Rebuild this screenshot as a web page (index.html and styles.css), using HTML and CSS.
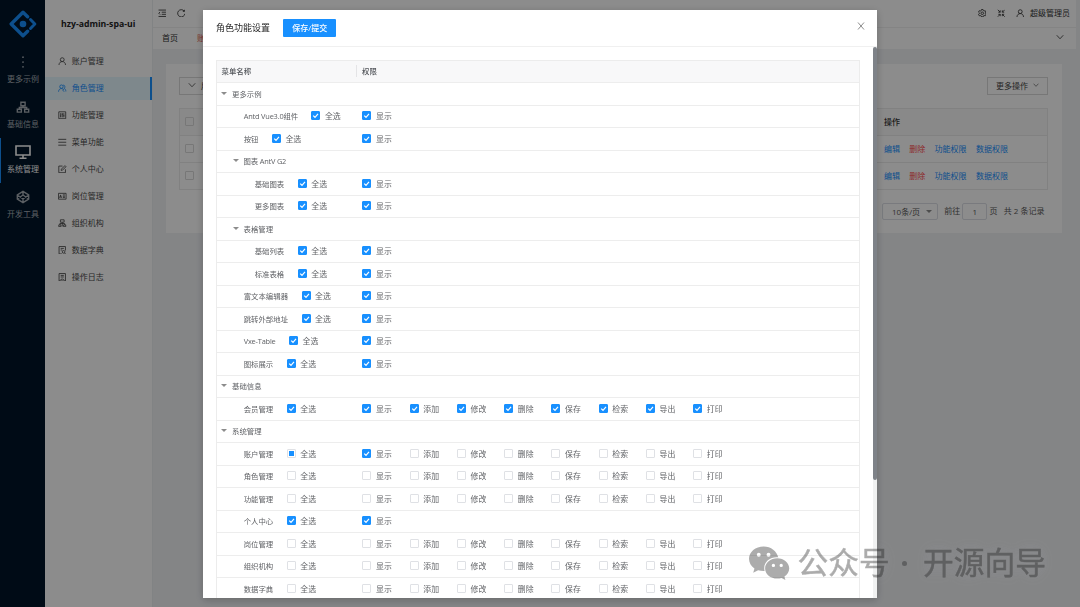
FILE: index.html
```html
<!DOCTYPE html>
<html>
<head>
<meta charset="utf-8">
<title>hzy-admin-spa-ui</title>
<link rel="stylesheet" href="styles.css">
</head>
<body>
<div class="app">
  <nav class="rail">
    <div class="logo"><svg viewBox="0 0 28 28"><g fill="none" stroke="#1890ff" stroke-width="3.4" stroke-linejoin="round" stroke-linecap="round"><path d="M18.600 6.700 14 2.200 2.200 14 14 25.800l4.600-4.500"/><path d="m21.500 9.500 4.400 4.500-4.400 4.500" stroke-width="2.900"/></g><circle cx="14" cy="14" r="3.300" fill="#1890ff"/></svg></div>
    <a class="rail-item"><svg viewBox="0 0 16 16" fill="currentColor"><circle cx="8" cy="2.500" r="1"/><circle cx="8" cy="8" r="1"/><circle cx="8" cy="13.500" r="1"/></svg><span>更多示例</span></a>
    <a class="rail-item"><svg viewBox="0 0 16 16" class="line"><path d="M5.600 2.500h4.800v4H5.600zM1.500 10.500h4.600v3.400H1.500zM9.900 10.500h4.600v3.400H9.900zM8 6.500v2M3.800 10.500v-2h8.400v2"/></svg><span>基础信息</span></a>
    <a class="rail-item active"><svg viewBox="0 0 16 16" class="line"><path d="M1 2h14v9H1zM8 11v3M4.500 14.200h7"/></svg><span>系统管理</span></a>
    <a class="rail-item"><svg viewBox="0 0 16 16" class="line"><path d="m8 1.500 6.500 4.200v4.600L8 14.500l-6.500-4.200V5.700zM8 1.500v4.200M8 10.300v4.200M1.500 5.700 8 10.300l6.500-4.600M1.500 10.300 8 5.700l6.500 4.600"/></svg><span>开发工具</span></a>
  </nav>
  <aside class="side">
    <h1>hzy-admin-spa-ui</h1>
    <a class="side-item"><svg viewBox="0 0 16 16" class="line"><circle cx="8" cy="5" r="3.600"/><path d="M1.800 15c.3-4 2.600-6.400 6.200-6.400s5.900 2.400 6.200 6.400"/></svg>账户管理</a>
    <a class="side-item active"><svg viewBox="0 0 16 16" class="line"><circle cx="6.500" cy="5" r="3.200"/><path d="M1 14.500c.3-3.500 2.200-6 5.500-6 2 0 3.500 1 4.500 2.700M9.800 2a3.200 3.200 0 0 1 1.500 6c2.200 1 3.300 3 3.500 6M8.500 11l3 3.500"/></svg>角色管理</a>
    <a class="side-item"><svg viewBox="0 0 16 16" class="line"><path d="M1.500 1.500h13v13h-13zM5 4v8M8 4v8M11 4v8M4 9.500h2M7 6h2M10 9h2"/></svg>功能管理</a>
    <a class="side-item"><svg viewBox="0 0 16 16" class="line"><path d="M.5 2.500h15M.5 8h15M.5 13.500h15"/></svg>菜单功能</a>
    <a class="side-item"><svg viewBox="0 0 16 16" class="line"><path d="M8.500 2H1.500v12.500H14V8M6 10.200l.4-2.400L13 1.200l2 2-6.600 6.600z"/></svg>个人中心</a>
    <a class="side-item"><svg viewBox="0 0 16 16" class="line"><path d="M.8 2.500h14.400v11H.8zM3 11l1.800-5.500L6.600 11M3.600 9.300H6M9 5.500h4M9 8h4M9 10.500h4"/></svg>岗位管理</a>
    <a class="side-item"><svg viewBox="0 0 16 16" class="line"><path d="M4.500 1.500h7v4.500h-7zM1.500 11h4v3.500h-4zM10.500 11h4v3.500h-4zM8 6v8M3.500 11V8.500h9V11"/></svg>组织机构</a>
    <a class="side-item"><svg viewBox="0 0 16 16" class="line"><path d="M7.500 15H2V1h12v7.500M5 4.500h6M5 7.500h3"/><circle cx="10.500" cy="11" r="2.500"/><path d="m12.300 13 2 2"/></svg>数据字典</a>
    <a class="side-item"><svg viewBox="0 0 16 16" class="line"><path d="M2 1h12v14H2zM5 4.500h6M5 7.500h6M4 14c1-3.500 7-3.500 8 0"/></svg>操作日志</a>
  </aside>
  <main class="main">
    <header class="topbar">
      <svg viewBox="0 0 16 16" class="line"><path d="M1 2h14M7 6h8M7 10h8M1 14h14M4 5.500 1.500 8 4 10.500"/></svg>
      <svg viewBox="0 0 16 16" class="line"><path d="M13.500 4A6.800 6.800 0 1 0 14.800 9M14 1.500V4.500h-3"/></svg>
      <span class="grow"></span>
      <svg viewBox="0 0 16 16" class="line"><path d="m6.500 1-.5 2-1.500.8-2-.7L1 5.900 2.500 7.200v1.600L1 10.100l1.500 2.800 2-.7L6 13l.5 2h3l.5-2 1.500-.8 2 .7 1.500-2.800-1.500-1.300V7.200L15 5.900l-1.500-2.800-2 .7L10 3l-.5-2z"/><circle cx="8" cy="8" r="2.400"/></svg>
      <svg viewBox="0 0 16 16" class="line"><path d="M1.500 1.500 6 6M2.500 6H6V2.500M14.500 1.500 10 6M13.500 6H10V2.500M1.500 14.500 6 10M2.500 10H6v3.500M14.500 14.500 10 10M13.500 10H10v3.500"/></svg>
      <svg viewBox="0 0 16 16" class="line"><circle cx="8" cy="5" r="3.600"/><path d="M1.800 15c.3-4 2.600-6.400 6.200-6.400s5.900 2.400 6.200 6.400"/></svg>
      <span class="user">超级管理员</span>
    </header>
    <div class="tabs"><span>首页</span><span class="tab-on">账户管理</span><span class="grow"></span><svg viewBox="0 0 16 16" class="line"><path d="m1.500 4.500 6.500 7 6.500-7"/></svg></div>
    <section class="card">
      <div class="tools"><span class="btn"><svg viewBox="0 0 16 16" class="line"><path d="m1.500 4.500 6.500 7 6.500-7"/></svg>展开</span><span class="btn more">更多操作<svg viewBox="0 0 16 16" class="line"><path d="m1.500 4.500 6.500 7 6.500-7"/></svg></span></div>
      <div class="grid">
        <div class="grid-row head"><i class="ck"></i><b>操作</b></div>
        <div class="grid-row"><i class="ck"></i><p class="acts"><a>编辑</a><a class="del">删除</a><a>功能权限</a><a>数据权限</a></p></div>
        <div class="grid-row"><i class="ck"></i><p class="acts"><a>编辑</a><a class="del">删除</a><a>功能权限</a><a>数据权限</a></p></div>
      </div>
      <div class="pager"><span class="size">10条/页<i class="caret"></i></span><span>前往</span><span class="page">1</span><span>页</span><span class="total">共 2 条记录</span></div>
    </section>
  </main>
</div>
<div class="mask">
  <div class="modal">
    <header class="modal-head"><h2>角色功能设置</h2><button class="save">保存/提交</button><span class="grow"></span><svg viewBox="0 0 16 16" class="line"><path d="m2 1 12 14M14 1 2 15"/></svg></header>
    <div class="modal-body">
      <div class="tree">
        <div class="tree-row tree-head"><span class="name">菜单名称</span><span class="perms">权限</span></div>
      </div>
      <div class="scroll"><div class="thumb"></div></div>
    </div>
  </div>
</div>
<div class="mark">
  <svg viewBox="0 0 42 34"><path fill-rule="evenodd" d="M15 0C6.700 0 0 5.600 0 12.700c0 4 2.100 7.500 5.600 9.900L4.300 27l5-2.500c1.800.5 3.700.8 5.700.8h1C13.800 17 21 10.500 30 11.300 28.600 4.800 22.500 0 15 0zM10 6.500a2 2 0 1 1 0 4 2 2 0 0 1 0-4zM20 6.500a2 2 0 1 1 0 4 2 2 0 0 1 0-4z"/><path fill-rule="evenodd" d="M29 12.200c-7 0-12.500 4.700-12.500 10.400S22 33 29 33c1.500 0 3-.2 4.300-.6l4 2-1-3.500c3-2 4.900-5 4.900-8.300 0-5.700-5.500-10.400-12.200-10.400zM25 17.800a1.700 1.700 0 1 1 0 3.400 1.700 1.700 0 0 1 0-3.400zM33 17.800a1.700 1.700 0 1 1 0 3.400 1.700 1.700 0 0 1 0-3.400z"/></svg>
  <span>公众号</span><i></i><span>开源向导</span>
</div>
<script src="tree.js"></script>
</body>
</html>
```

FILE: styles.css
```css
* { box-sizing: border-box; }
body { margin: 0; height: 607px; overflow: hidden; font-family: "Open Sans", "Noto Sans CJK SC", sans-serif; font-size: 8px; color: #595959; }
a, p, h1, h2 { margin: 0; }
svg { display: block; flex: none; }
.line { fill: none; stroke: currentColor; stroke-width: 1.6; }
.grow { flex: 1; }
.app { display: flex; height: 607px; background: #f0f2f5; }

.rail { width: 45px; background: #001529; color: #a6adb4; }
.logo { height: 48px; padding: 9.500px 0 0 8.500px; }
.logo svg { width: 28px; height: 28px; }
.rail-item { display: flex; flex-direction: column; align-items: center; height: 45px; padding-top: 7px; gap: 4px; border-left: 1px solid transparent; line-height: 12px; white-space: nowrap; }
.rail-item svg { width: 14px; height: 14px; }
.rail-item.active { color: #fff; border-color: #1890ff; }
.rail-item.active svg { width: 16px; height: 16px; margin: -1px; }

.side { width: 107.500px; background: #fff; border-right: 1px solid #eceef0; }
.side h1 { height: 50px; padding-left: 16px; font-size: 8.700px; line-height: 49px; color: #262626; font-weight: 700; }
.side-item { display: flex; align-items: center; gap: 5px; height: 22.500px; margin-bottom: 4.500px; padding: 0 0 1px 13.200px; color: #474747; }
.side-item svg { width: 8.500px; height: 8.500px; }
.side-item.active { background: #e6f7ff; color: #1890ff; border-right: 2px solid #1890ff; }

.main { flex: 1; }
.topbar { display: flex; align-items: center; height: 27.500px; width: 923px; padding: 0 5.500px 1px 5px; background: #fff; border-bottom: 1px solid #f0f0f0; color: #333; }
.topbar svg { width: 8.500px; height: 8.500px; margin-right: 10.500px; }
.topbar svg:last-of-type { margin-right: 6px; }
.tabs { display: flex; align-items: center; gap: 19px; height: 21px; width: 923px; padding: 0 11.500px 2px 9.500px; background: #fff; color: #333; }
.tab-on { color: #e35d50; }
.tabs svg { width: 8px; height: 8px; }
.card { width: 895.500px; height: 169px; margin: 15.500px 0 0 13.500px; padding: 13px 14px 0 13px; background: #fff; }
.tools { display: flex; justify-content: space-between; margin-bottom: 13.500px; }
.btn { display: flex; align-items: center; gap: 5px; height: 17.500px; padding: 0 7.500px 1px 8px; border: 1px solid #d9d9d9; color: #474747; }
.btn svg { width: 8px; height: 8px; }
.more svg { width: 6px; height: 6px; }
.grid { border: 1px solid #ebebeb; border-bottom: 0; }
.grid-row { display: flex; align-items: center; justify-content: space-between; height: 27px; padding: 0 0 1px 5px; border-bottom: 1px solid #ebebeb; }
.grid-row.head { background: #fafafa; color: #333; height: 26.500px; }
.grid-row b { width: 162.500px; font-weight: 500; }
.ck { width: 9px; height: 9px; border: 1px solid #d9d9d9; border-radius: 1px; }
.acts { display: flex; width: 162.500px; gap: 9.300px; color: #1890ff; }
.acts .del { color: #ff4d4f; }
.pager { display: flex; align-items: center; justify-content: flex-end; gap: 2.200px; height: 17px; margin-top: 13px; padding-right: 3px; line-height: 15px; }
.pager > span { margin-top: -1px; }
.pager > .size, .pager > .page { margin-top: 0; }
.size { display: flex; align-items: center; justify-content: space-between; width: 56px; height: 17px; padding: 0 5px 0 9px; margin-right: 4px; border: 1px solid #dcdfe6; border-radius: 2px; }
.page { width: 25px; height: 17px; border: 1px solid #dcdfe6; border-radius: 2px; text-align: center; line-height: 15px; }
.total { margin-left: 4px; }
.caret { width: 0; height: 0; border: 3px solid transparent; border-top: 3.500px solid #8c8c8c; border-bottom: 0; }

.mask { position: fixed; inset: 0; padding: 10px 0 0 202.700px; background: rgba(0, 0, 0, .45); }
.modal { width: 674.800px; height: 588.300px; overflow: hidden; background: #fff; box-shadow: 0 2px 8px rgba(0, 0, 0, .22); }
.modal-head { display: flex; align-items: center; height: 36.500px; padding: 0 12px 0 13.300px; border-bottom: 1px solid #f0f0f0; }
.modal-head h2 { width: 67.500px; font-size: 9px; font-weight: 400; color: #262626; white-space: nowrap; }
.modal-head svg { width: 8px; height: 8px; margin-top: -4px; color: #707070; }
.save { width: 52.500px; height: 18px; padding: 0; border: 0; border-radius: 1px; background: #1890ff; color: #fff; font: 500 8px/18px "Open Sans", "Noto Sans CJK SC", sans-serif; }
.modal-body { display: flex; justify-content: space-between; height: 552px; padding-left: 13.300px; }
.tree { width: 644px; margin-top: 13.500px; border: 1px solid #ececec; font-size: 7.400px; color: #606266; }
.tree-row { display: flex; align-items: center; height: 22.500px; padding-bottom: 1.500px; border-bottom: 1px solid #ededed; white-space: nowrap; }
.tree-head { background: #f8f8f9; font-weight: 500; color: #515459; height: 22px; }
.tree-head .name { height: 12px; line-height: 12px; border-right: 1px solid #e4e4e6; }
.name { display: flex; align-items: center; width: 140.500px; padding-left: 4.500px; }
.latin { letter-spacing: -.18px; }
.tree-head .perms { padding-left: 4.500px; }
.perms { display: flex; padding-left: 5px; }
.lvl1 { padding-left: 16px; }
.lvl2 { padding-left: 27px; }
.leaf { padding-left: 26.700px; }
.leaf.lvl2 { padding-left: 37.700px; }
.name .caret { margin-right: 4.500px; }
.opt { display: flex; align-items: center; width: 47.250px; font-size: 7.900px; letter-spacing: 0; }
.name .opt { margin-left: 13.500px; }
.box { display: grid; place-items: center; flex: none; width: 9px; height: 9px; margin-right: 4.500px; border: 1px solid #dfe1e5; border-radius: 1px; }
.box.on { border-color: #1890ff; background: #1890ff; }
.box.on svg { width: 7px; height: 7px; fill: none; stroke: #fff; stroke-width: 1.200; }
.box.half::before { content: ""; width: 5px; height: 5px; background: #1890ff; }
.scroll { width: 4.500px; background: #f0f1f1; }
.thumb { height: 433px; border-radius: 2px; background: #7e8288; }

.mark { position: fixed; left: 749px; top: 541px; display: flex; align-items: center; height: 44px; font-size: 30.700px; color: #202020; opacity: .37; white-space: nowrap; text-shadow: 0 0 14px rgba(255, 255, 255, .3); }
.mark svg { width: 41px; height: 34px; margin: -1px 7.500px 0 0; fill: #202020; overflow: visible; }
.mark span { line-height: 44px; margin-top: -2px; -webkit-text-stroke: .5px #202020; }
.mark i { width: 5px; height: 5px; margin: 0 16.500px 0 12px; border-radius: 50%; background: #202020; }
```

FILE: tree.js
```js
const ALL = ['显示', '添加', '修改', '删除', '保存', '检索', '导出', '打印'];
const SHOW = ['显示'];
// name, level, kind, state of "select all", permissions, how many are ticked
const rows = [
  ['更多示例', 0, 'group'],
  ['Antd Vue3.0组件', 1, 'leaf', 'on', SHOW, 1],
  ['按钮', 1, 'leaf', 'on', SHOW, 1],
  ['图表 AntV G2', 1, 'group'],
  ['基础图表', 2, 'leaf', 'on', SHOW, 1],
  ['更多图表', 2, 'leaf', 'on', SHOW, 1],
  ['表格管理', 1, 'group'],
  ['基础列表', 2, 'leaf', 'on', SHOW, 1],
  ['标准表格', 2, 'leaf', 'on', SHOW, 1],
  ['富文本编辑器', 1, 'leaf', 'on', SHOW, 1],
  ['跳转外部地址', 1, 'leaf', 'on', SHOW, 1],
  ['Vxe-Table', 1, 'leaf', 'on', SHOW, 1],
  ['图标展示', 1, 'leaf', 'on', SHOW, 1],
  ['基础信息', 0, 'group'],
  ['会员管理', 1, 'leaf', 'on', ALL, 8],
  ['系统管理', 0, 'group'],
  ['账户管理', 1, 'leaf', 'half', ALL, 1],
  ['角色管理', 1, 'leaf', '', ALL, 0],
  ['功能管理', 1, 'leaf', '', ALL, 0],
  ['个人中心', 1, 'leaf', 'on', SHOW, 1],
  ['岗位管理', 1, 'leaf', '', ALL, 0],
  ['组织机构', 1, 'leaf', '', ALL, 0],
  ['数据字典', 1, 'leaf', '', ALL, 0]
];
const tick = '<svg viewBox="0 0 7 7"><path d="M1.2 3.600 3 5.300 6 1.900"/></svg>';
const option = (label, state) =>
  `<span class="opt"><i class="box ${state}">${state === 'on' ? tick : ''}</i>${label}</span>`;
document.querySelector('.tree').insertAdjacentHTML('beforeend', rows.map(
  ([name, level, kind, state, perms = [], ticked]) => `<div class="tree-row">
    <span class="name ${kind} lvl${level}${/[A-Z]/.test(name) ? ' latin' : ''}">${kind === 'group' ? '<i class="caret"></i>' : ''}${name}${kind === 'leaf' ? option('全选', state) : ''}</span>
    <span class="perms">${perms.map((p, i) => option(p, i < ticked ? 'on' : '')).join('')}</span>
  </div>`).join(''));
```
